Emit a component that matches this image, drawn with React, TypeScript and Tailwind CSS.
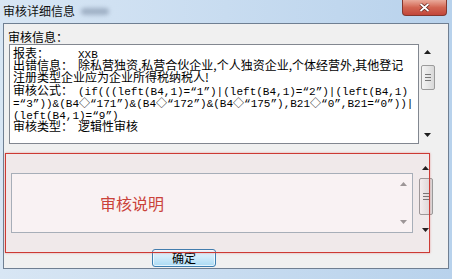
import React from "react";

const cjk = "font-['Noto_Sans_CJK_SC',sans-serif]";
const mono = "font-['Liberation_Mono','Noto_Sans_CJK_SC',monospace] text-[11px]";

function Arrow({ up, color = "#1e1e1e" }: { up?: boolean; color?: string }) {
  return (
    <svg width="7" height="4" viewBox="0 0 7 4" className="block">
      <path d={up ? "M0 4 L3.5 0 L7 4Z" : "M0 0 L7 0 L3.5 4Z"} fill={color} />
    </svg>
  );
}

function Thumb({ h }: { h: string }) {
  return (
    <div className={`${h} w-[14px] rounded-[2px] border border-[#9b9b9b] bg-gradient-to-r from-[#f4f4f4] to-[#d9d9d9] flex flex-col items-center justify-center gap-[2px]`}>
      <div className="h-px w-[6px] bg-[#777]" />
      <div className="h-px w-[6px] bg-[#777]" />
      <div className="h-px w-[6px] bg-[#777]" />
    </div>
  );
}

function Line({ children }: { children: React.ReactNode }) {
  return <div className="h-[12.2px] leading-[12.2px] whitespace-nowrap">{children}</div>;
}

function Label({ children }: { children: React.ReactNode }) {
  return <span className="inline-block w-[65px]">{children}</span>;
}

export default function App() {
  return (
    <div className={`w-[452px] h-[279px] overflow-hidden bg-gradient-to-r from-[#d8e6f4] to-[#b8d2ec] text-black ${cjk}`}>
      {/* Title bar */}
      <div className="flex h-[23px] items-start">
        <div className="flex h-[22px] items-center pl-[3px] text-[12px] text-[#111]">
          审核详细信息
          <div className="ml-[6px] h-[7px] w-[28px] rounded-full bg-[#8b9cb2] opacity-70 blur-[2px]" />
        </div>
        <div className="ml-auto mr-[5px] flex h-[16px] w-[45px] items-center justify-center rounded-b-[4px] border border-t-0 border-[#83372e] bg-gradient-to-b from-[#e9aa9b] via-[#d26552] to-[#c2463a]">
          <svg width="11" height="9" viewBox="0 0 11 9">
            <path d="M1.5 1 L9.5 8 M9.5 1 L1.5 8" stroke="#5a1d16" strokeWidth="3.2" />
            <path d="M1.5 1 L9.5 8 M9.5 1 L1.5 8" stroke="#ffffff" strokeWidth="1.8" />
          </svg>
        </div>
      </div>

      {/* Client area */}
      <div className="relative mx-[3px] h-[246px] border border-[#6f7f92] bg-[#f0f0f0]">
        <div className="ml-[4px] mt-[6px] h-[13px] text-[12px] leading-[13px]">审核信息：</div>

        <div className="ml-[5px] mt-[1px] flex h-[100px]">
          <div className="h-full w-[410px] overflow-hidden border border-[#828790] bg-white pl-[3px] pt-[2px] text-[12px]">
            <Line>
              <Label>报表：</Label>
              <span className={mono}>XXB</span>
            </Line>
            <Line>
              <Label>出错信息：</Label>除私营独资,私营合伙企业,个人独资企业,个体经营外,其他登记
            </Line>
            <Line>注册类型企业应为企业所得税纳税人!</Line>
            <Line>
              <Label>审核公式：</Label>
              <span className={mono}>(if(((left(B4,1)=“1”)|(left(B4,1)=“2”)|(left(B4,1)</span>
            </Line>
            <Line>
              <span className={mono}>=“3”))&amp;(B4◇“171”)&amp;(B4◇“172”)&amp;(B4◇“175”),B21◇“0”,B21=“0”))|</span>
            </Line>
            <Line>
              <span className={mono}>(left(B4,1)=“9”)</span>
            </Line>
            <Line>
              <Label>审核类型：</Label>逻辑性审核
            </Line>
          </div>
          <div className="flex w-[17px] flex-col items-center pt-[6px]">
            <Arrow up />
            <div className="mt-[11px]">
              <Thumb h="h-[25px]" />
            </div>
            <div className="mt-[43px]">
              <Arrow />
            </div>
          </div>
        </div>

        <div className="mt-[2px] flex h-[100px]">
          <div className="ml-[7px] pt-[27px]">
            <div className="flex h-[60px] w-[402px] border border-[#a5b3bc] bg-[#f9f9f9]">
              <div className="flex flex-1 items-center pl-[88px] text-[16px] text-[#c9443a]">审核说明</div>
              <div className="flex w-[17px] flex-col items-center justify-between py-[8px]">
                <Arrow up color="#9a9a9a" />
                <Arrow color="#9a9a9a" />
              </div>
            </div>
          </div>
          <div className="ml-[4px] flex w-[17px] flex-col items-center pt-[20px]">
            <Arrow up />
            <div className="mt-[8px]">
              <Thumb h="h-[37px]" />
            </div>
            <div className="mt-[13px]">
              <Arrow />
            </div>
          </div>
        </div>

        <div className="ml-[148px] mt-[3px] flex h-[18px] w-[64px] items-center justify-center rounded-[3px] border border-[#3c7fb1] bg-gradient-to-b from-[#eaf6fd] via-[#cdeafa] to-[#a9daf3] text-[12px] leading-none shadow-[inset_0_0_0_1px_rgba(255,255,255,0.7)]">
          确定
        </div>

        {/* red highlight annotation drawn over the screenshot */}
        <div className="pointer-events-none absolute left-[1px] top-[129px] h-[100px] w-[425px] border border-[#cc3a34] bg-red-500/[0.03] shadow-[0_0_2px_rgba(220,80,80,0.5)]" />
      </div>
    </div>
  );
}
